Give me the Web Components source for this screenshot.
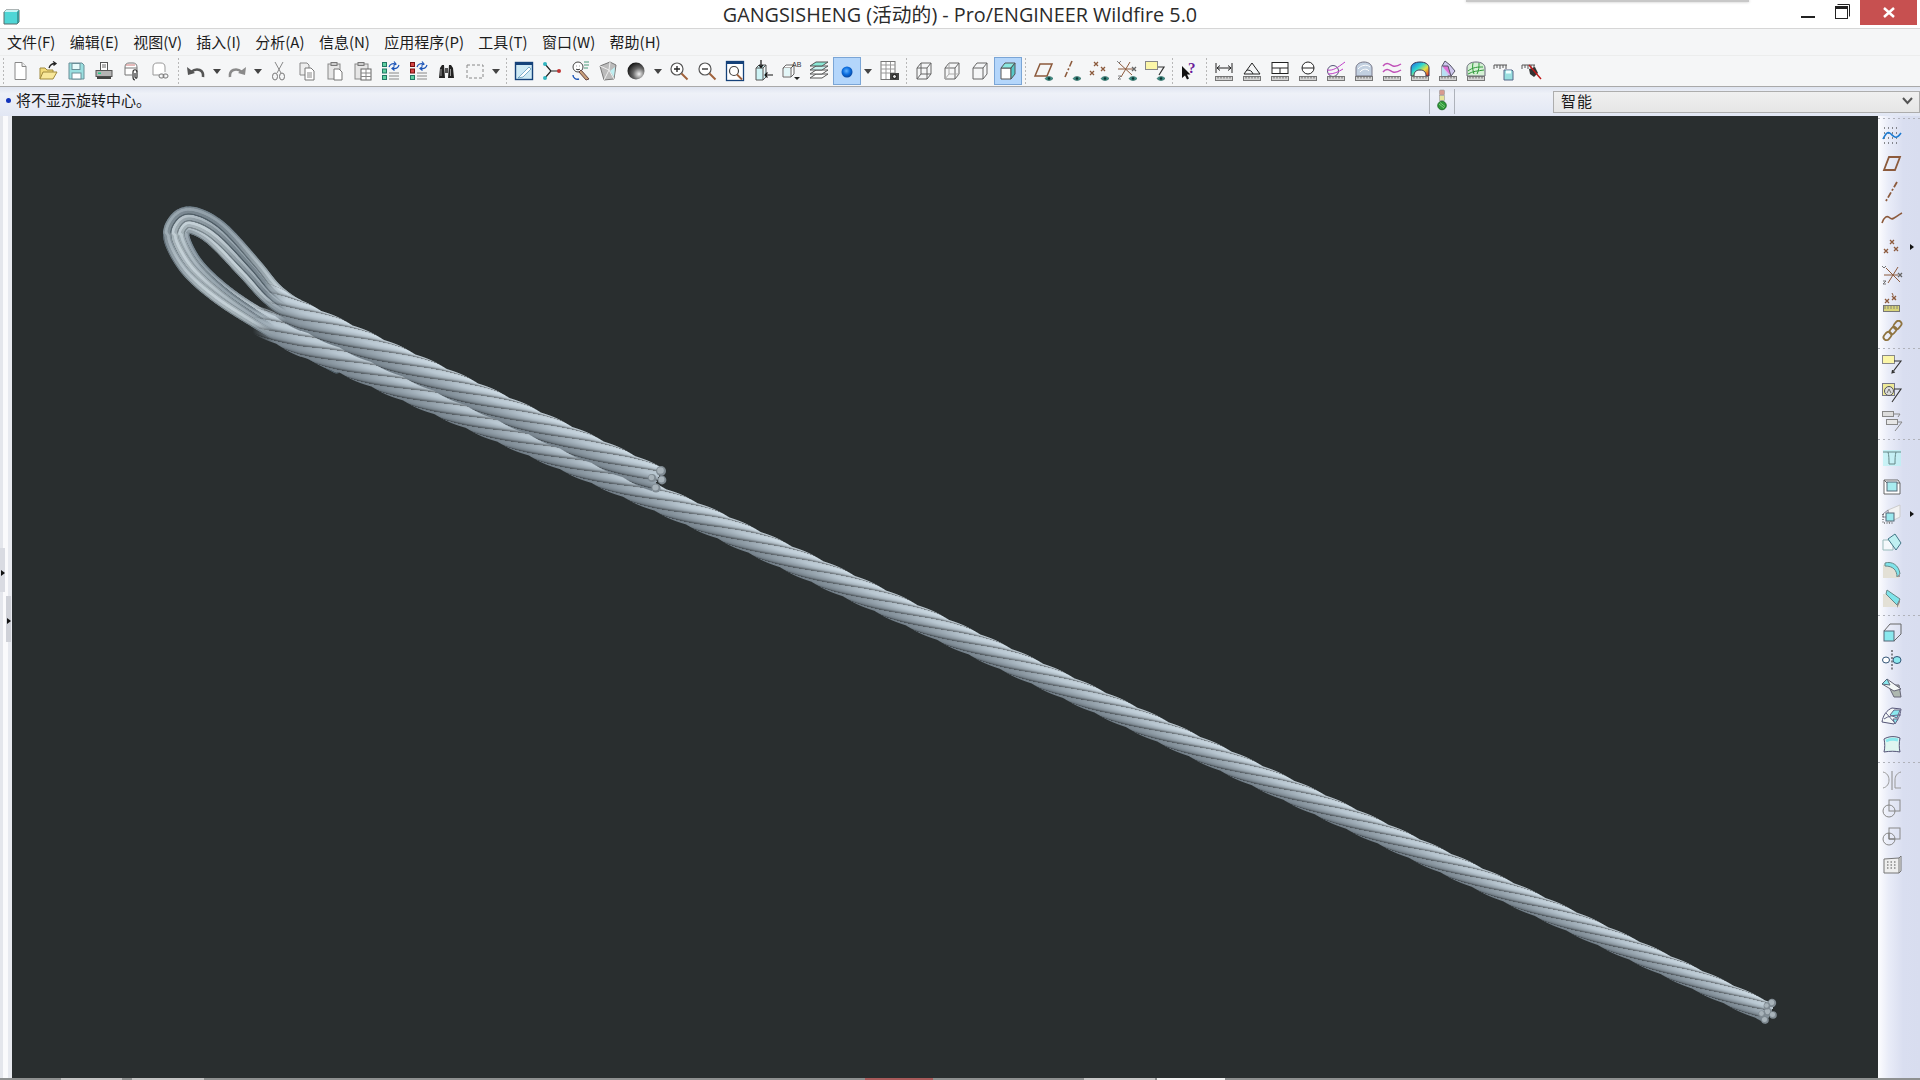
<!DOCTYPE html>
<html>
<head>
<meta charset="utf-8">
<title>GANGSISHENG</title>
<style>
  html, body { margin: 0; padding: 0; width: 1920px; height: 1080px; overflow: hidden; background: #f5f6f7; }
  body { font-family: "Noto Sans CJK SC", "Liberation Sans", sans-serif; }
</style>
</head>
<body>
<pe-app>
  <pe-titlebar>GANGSISHENG (活动的) - Pro/ENGINEER Wildfire 5.0</pe-titlebar>
  <pe-menubar>
    <pe-menu>文件(F)</pe-menu><pe-menu>编辑(E)</pe-menu><pe-menu>视图(V)</pe-menu><pe-menu>插入(I)</pe-menu><pe-menu>分析(A)</pe-menu>
    <pe-menu>信息(N)</pe-menu><pe-menu>应用程序(P)</pe-menu><pe-menu>工具(T)</pe-menu><pe-menu>窗口(W)</pe-menu><pe-menu>帮助(H)</pe-menu>
  </pe-menubar>
  <pe-toolbar>
    <pe-sep w="6"></pe-sep>
    <pe-tool icon="new"></pe-tool><pe-tool icon="open"></pe-tool><pe-tool icon="save"></pe-tool><pe-tool icon="print"></pe-tool><pe-tool icon="mail"></pe-tool><pe-tool icon="mail2"></pe-tool>
    <pe-sep w="8"></pe-sep>
    <pe-tool icon="undo"></pe-tool><pe-drop></pe-drop><pe-tool icon="redo"></pe-tool><pe-drop w="14"></pe-drop>
    <pe-tool icon="cut"></pe-tool><pe-tool icon="copy"></pe-tool><pe-tool icon="paste"></pe-tool><pe-tool icon="pastesp"></pe-tool><pe-tool icon="regen"></pe-tool><pe-tool icon="regen2"></pe-tool><pe-tool icon="find"></pe-tool><pe-tool icon="selbox"></pe-tool><pe-drop></pe-drop>
    <pe-sep w="8"></pe-sep>
    <pe-tool icon="repaint"></pe-tool><pe-tool icon="spin"></pe-tool><pe-tool icon="orient"></pe-tool><pe-tool icon="viewmgr"></pe-tool><pe-tool icon="ball"></pe-tool><pe-drop w="15"></pe-drop>
    <pe-tool icon="zoomin"></pe-tool><pe-tool icon="zoomout"></pe-tool><pe-tool icon="fit"></pe-tool><pe-tool icon="reorient"></pe-tool><pe-tool icon="saved"></pe-tool><pe-tool icon="layers"></pe-tool><pe-tool icon="center" active></pe-tool><pe-drop w="14"></pe-drop><pe-tool icon="table"></pe-tool>
    <pe-sep w="7"></pe-sep>
    <pe-tool icon="wire"></pe-tool><pe-tool icon="hidden"></pe-tool><pe-tool icon="nohidden"></pe-tool><pe-tool icon="shaded" active></pe-tool>
    <pe-sep w="7"></pe-sep>
    <pe-tool icon="planes"></pe-tool><pe-tool icon="axes"></pe-tool><pe-tool icon="points"></pe-tool><pe-tool icon="csys"></pe-tool><pe-tool icon="annot"></pe-tool>
    <pe-sep w="6"></pe-sep>
    <pe-tool icon="help"></pe-tool>
    <pe-sep w="7"></pe-sep>
    <pe-tool icon="mlen"></pe-tool><pe-tool icon="mang"></pe-tool><pe-tool icon="marea"></pe-tool><pe-tool icon="mdia"></pe-tool><pe-tool icon="mcurve"></pe-tool><pe-tool icon="mmesh"></pe-tool><pe-tool icon="mwave"></pe-tool><pe-tool icon="mrain"></pe-tool><pe-tool icon="msolid"></pe-tool><pe-tool icon="mgreen"></pe-tool><pe-tool icon="msave"></pe-tool><pe-tool icon="mdel"></pe-tool>
  </pe-toolbar>
  <pe-statusbar>将不显示旋转中心。<pe-combo slot="combo">智能</pe-combo></pe-statusbar>
  <pe-main>
    <pe-sash></pe-sash>
    <pe-viewport></pe-viewport>
    <pe-rightbar>
      <pe-rsep h="5"></pe-rsep>
      <pe-tool side icon="sketch"></pe-tool><pe-tool side icon="plane"></pe-tool><pe-tool side icon="axis"></pe-tool><pe-tool side icon="curve"></pe-tool><pe-tool side fly icon="rpoints"></pe-tool><pe-tool side icon="rcsys"></pe-tool><pe-tool side icon="analysis"></pe-tool><pe-tool side icon="chain"></pe-tool>
      <pe-rsep h="6"></pe-rsep>
      <pe-tool side icon="note"></pe-tool><pe-tool side icon="note2"></pe-tool><pe-tool side icon="note3"></pe-tool>
      <pe-rsep h="9"></pe-rsep>
      <pe-tool side icon="hole"></pe-tool><pe-tool side icon="shell"></pe-tool><pe-tool side fly icon="rib"></pe-tool><pe-tool side icon="draft"></pe-tool><pe-tool side icon="round"></pe-tool><pe-tool side icon="chamfer"></pe-tool>
      <pe-rsep h="6"></pe-rsep>
      <pe-tool side icon="extrude"></pe-tool><pe-tool side icon="revolve"></pe-tool><pe-tool side icon="sweep"></pe-tool><pe-tool side icon="blend"></pe-tool><pe-tool side icon="fill"></pe-tool>
      <pe-rsep h="8"></pe-rsep>
      <pe-tool side icon="mirror"></pe-tool><pe-tool side icon="merge"></pe-tool><pe-tool side icon="trim"></pe-tool><pe-tool side icon="pattern"></pe-tool>
    </pe-rightbar>
  </pe-main>
  <pe-taskstrip></pe-taskstrip>
</pe-app>

<script>
// small helpers for the measure icons and the "show" icons
const EYE = '<path d="M13 18.5c2-2.5 6-2.5 8 0-2 2.500-6 2.500-8 0z" fill="#3f8f86" stroke="#1f5f58" stroke-width=".7"/><circle cx="17" cy="18.500" r="1.300" fill="#0b3330"/>';
const RULER = '<rect x="2.500" y="16.500" width="17" height="4" fill="#d4d4d4" stroke="#777"/><path d="M5 16.500v2M8 16.500v2M11 16.500v2M14 16.500v2M17 16.500v2" stroke="#666"/>';
const X = (x, y, c = '#8c5a3c') => `<path d="M${x - 2} ${y - 2}l4 4m0-4l-4 4" stroke="${c}" stroke-width="1.300" fill="none"/>`;
const S = 'fill="none" stroke="#666"';

const ICONS = {
  new: '<path d="M6 2.500h7l4 4v13H6z" fill="#fff" stroke="#888"/><path d="M13 2.500v4h4" fill="#eee" stroke="#888"/>',
  open: '<path d="M3 19V8h5l2 2h6v2" fill="#f3dc7c" stroke="#a08a3c"/><path d="M3 19l3-7h14l-4 7z" fill="#f8e89a" stroke="#a08a3c"/><path d="M12 8c1-3 3-4.500 6-4.500m-2-2L19 3.500l-2.500 2" fill="none" stroke="#222" stroke-width="1.300"/>',
  save: '<path d="M4 3h13l2 2v14H4z" fill="#9adfe0" stroke="#6a8f98"/><rect x="7" y="3.500" width="8" height="6" fill="#e8fbfb" stroke="#6a8f98"/><rect x="7" y="13" width="9" height="6" fill="#fff" stroke="#6a8f98"/>',
  print: '<rect x="7.500" y="2.500" width="7" height="8" fill="#fff" stroke="#555"/><path d="M9 5h4M9 7h4" stroke="#666"/><rect x="3" y="10.500" width="16" height="6" fill="#b4b4b4" stroke="#555"/><rect x="4" y="16.500" width="14" height="2.500" fill="#444"/><rect x="5" y="12.500" width="3" height="1.500" fill="#2c8"/>',
  mail: '<path d="M4 15V7c0-3 2-4 4-4h4c2 0 4 1 4 4v5M4 8h12M4 15h7" fill="#fff" stroke="#777"/><path d="M5 5h9" stroke="#c77"/><path d="M14 20c-2 0-2-2-2-3v-5c0-3 4-3 4 0v5c0 2-2 1-2 0v-4" fill="none" stroke="#333" stroke-width="1.200"/>',
  mail2: '<path d="M4 15V7c0-3 2-4 4-4h4c2 0 4 1 4 4v5M4 15h6" fill="#fff" stroke="#999"/><rect x="10" y="14" width="5" height="4" rx="2" fill="none" stroke="#777"/><rect x="14" y="14" width="5" height="4" rx="2" fill="none" stroke="#777"/>',
  undo: '<path d="M18 17c1-7-6-10-12-5" fill="none" stroke="#555" stroke-width="2.600"/><path d="M2 7l1 8 7-2z" fill="#555"/>',
  redo: '<path d="M4 17c-1-7 6-10 12-5" fill="none" stroke="#8a8a8a" stroke-width="2.600"/><path d="M20 7l-1 8-7-2z" fill="#8a8a8a"/>',
  cut: '<path d="M7 2l6 11M15 2L9 13" stroke="#888" fill="none"/><ellipse cx="7" cy="16.500" rx="2.500" ry="3.500" fill="none" stroke="#777"/><ellipse cx="14" cy="16.500" rx="2.500" ry="3.500" fill="none" stroke="#777"/>',
  copy: '<path d="M4 3h7l2 2v10H4z" fill="#eee" stroke="#888"/><path d="M9 8h6l3 3v9H9z" fill="#fff" stroke="#777"/><path d="M11 13h5M11 15h5M11 17h5" stroke="#888"/>',
  paste: '<rect x="4" y="4" width="12" height="15" fill="#e6e6e6" stroke="#888"/><rect x="7" y="2.500" width="6" height="3" fill="#ccc" stroke="#777"/><path d="M10 9h5l3 3v8h-8z" fill="#fff" stroke="#777"/>',
  pastesp: '<rect x="3" y="4" width="13" height="15" fill="#e6e6e6" stroke="#888"/><rect x="6" y="2.500" width="6" height="3" fill="#ccc" stroke="#777"/><rect x="9" y="9" width="10" height="11" fill="#fff" stroke="#666"/><path d="M14 9v11M9 13h10M9 16.500h10" stroke="#888"/>',
  regen: '<rect x="2.500" y="2.500" width="4" height="4" fill="#5fcfa0" stroke="#276"/><rect x="2.500" y="9" width="4" height="4" fill="#5fcfa0" stroke="#276"/><rect x="2.500" y="15.500" width="4" height="4" fill="#5fcfa0" stroke="#276"/><path d="M9 13h10M9 16h10M9 19h10" stroke="#888"/><path d="M9 7c1-3 4-4 6-3m-1-2.500l2 2.500-2.500 1.500M19 5c-1 3-3 4-6 3.500m1.500 2L12 8.500l2.500-2" fill="none" stroke="#1c55b8" stroke-width="1.200"/>',
  regen2: '<rect x="2.500" y="2.500" width="4" height="4" fill="#d64545" stroke="#711"/><rect x="2.500" y="9" width="4" height="4" fill="#d64545" stroke="#711"/><rect x="2.500" y="15.500" width="4" height="4" fill="#5fcfa0" stroke="#276"/><path d="M9 13h10M9 16h10M9 19h10" stroke="#888"/><path d="M9 7c1-3 4-4 6-3m-1-2.500l2 2.500-2.500 1.500M19 5c-1 3-3 4-6 3.500m1.500 2L12 8.500l2.500-2" fill="none" stroke="#1c55b8" stroke-width="1.200"/>',
  find: '<path d="M3 18l1-10 2-3h2l1 13zM12 18l1-13h2l2 3 1 10z" fill="#222"/><rect x="9" y="8" width="3" height="5" fill="#555"/><path d="M5 9v7M14.500 9v7" stroke="#999"/>',
  selbox: '<rect x="3" y="5" width="16" height="13" fill="none" stroke="#888" stroke-dasharray="3 2"/>',
  repaint: '<rect x="2.500" y="2.500" width="17" height="17" fill="#cfeaf5" stroke="#15427a" stroke-width="1.400"/><rect x="2" y="2" width="18" height="3" fill="#15427a"/><path d="M16 7L8 15l-3 3 5-1 8-8z" fill="#fff" stroke="#4f8fb5" stroke-width=".7"/>',
  spin: '<path d="M4 4l6 7-6 7M10 11h8" fill="none" stroke="#222" stroke-width="1.200"/><circle cx="4" cy="4" r="2" fill="#33b5c0"/><circle cx="4" cy="18" r="2" fill="#33b5c0"/><circle cx="18" cy="11" r="2" fill="#c03333"/>',
  orient: '<circle cx="9" cy="7" r="5" fill="#fff" stroke="#444"/><path d="M7 6h.500M10 6h.500M7 9c1 1 3 1 4 0" stroke="#444"/><path d="M15 2h5M15 5h5M15 8h4" stroke="#4a9a7a"/><path d="M4 15c0 3 3 5 6 4" fill="none" stroke="#1c55b8" stroke-width="1.400"/><path d="M12 10l8 9-3 1-7-8z" fill="#c9a07a" stroke="#644"/>',
  viewmgr: '<path d="M3 6l10-4 6 3-2 14-10 1z" fill="#bbb" stroke="#777"/><path d="M13 2l-1 8 5 9M12 10L3 6M12 10l-5 10" stroke="#eee" fill="none"/><path d="M13 11l5-4-1 10z" fill="#bfeff2"/>',
  ball: '<defs><radialGradient id="bg" cx=".68" cy=".68" r=".8"><stop offset="0" stop-color="#f2f2f2"/><stop offset=".45" stop-color="#666"/><stop offset="1" stop-color="#050505"/></radialGradient></defs><circle cx="11" cy="11" r="8.500" fill="url(#bg)"/>',
  zoomin: '<circle cx="9" cy="9" r="6" fill="#fff" stroke="#555" stroke-width="1.200"/><path d="M6 9h6M9 6v6" stroke="#222" stroke-width="1.300"/><path d="M13.500 13.500l6 6" stroke="#a0623c" stroke-width="2"/>',
  zoomout: '<circle cx="9" cy="9" r="6" fill="#fff" stroke="#555" stroke-width="1.200"/><path d="M6 9h6" stroke="#222" stroke-width="1.300"/><path d="M13.500 13.500l6 6" stroke="#a0623c" stroke-width="2"/>',
  fit: '<rect x="2.500" y="1.500" width="17" height="19" fill="#fff" stroke="#15427a" stroke-width="1.300"/><rect x="2" y="1" width="18" height="3" fill="#15427a"/><circle cx="10" cy="11" r="4.500" fill="none" stroke="#444" stroke-width="1.200"/><path d="M13 14.500l5 5" stroke="#a0623c" stroke-width="1.800"/>',
  reorient: '<path d="M4 8h7v12H4zM4 8l3-3h7l-3 3M11 20l3-3V5" fill="#cdf3f5" stroke="#555"/><path d="M9 0v7m-2-2l2 2.500L11 5" fill="none" stroke="#111" stroke-width="1.200"/><path d="M21 15h-8m2.500-2.500L13 15l2.500 2.500" fill="none" stroke="#111" stroke-width="1.200"/>',
  saved: '<path d="M3 8h8v9H3zM3 8l3-3h8l-3 3M11 17l3-3V5" fill="#fff" stroke="#666"/><path d="M4 8h6v8H4z" fill="#e3f6f7"/><text x="12" y="7" font-size="7" font-family="Liberation Sans" fill="#333">AB</text><path d="M14 17h6l-3 3z" fill="#222"/>',
  layers: '<path d="M2 18l6-4h12l-6 4z" fill="#fff" stroke="#555"/><path d="M2 14l6-4h12l-6 4z" fill="#fff" stroke="#555"/><path d="M2 10l6-4h12l-6 4z" fill="#c8f2f0" stroke="#555"/><path d="M2 6l6-4h12l-6 4z" fill="#8ae8d5" stroke="#555"/>',
  center: '<defs><radialGradient id="cb" cx=".45" cy=".4" r=".65"><stop offset="0" stop-color="#63b3ff"/><stop offset=".5" stop-color="#0d6fe0"/><stop offset="1" stop-color="#063e92"/></radialGradient></defs><circle cx="11" cy="12" r="5.500" fill="url(#cb)"/>',
  table: '<rect x="3" y="1.500" width="14" height="18" fill="#fff" stroke="#777"/><path d="M3 5h14M3 9h14M3 13h14M8 2v17M12.500 2v17" stroke="#999"/><rect x="12" y="13" width="9" height="7" fill="#444"/><circle cx="16.500" cy="16.500" r="2" fill="#ddd" stroke="#111"/>',
  wire: `<path d="M4 8h10v11H4zM4 8l4-5h10l-4 5M14 19l4-5V3M4 19l4-5V3M8 14h10" ${S}/>`,
  hidden: `<path d="M4 8h10v11H4zM4 8l4-5h10l-4 5M14 19l4-5V3" ${S}/><path d="M4 19l4-5V3M8 14h10" stroke="#aaa" fill="none"/>`,
  nohidden: `<path d="M4 8h10v11H4zM4 8l4-5h10l-4 5M14 19l4-5V3" ${S}/>`,
  shaded: '<path d="M4 8h10v11H4z" fill="#fff" stroke="#555"/><path d="M4 8l4-5h10l-4 5z" fill="#8ae8e0" stroke="#555"/><path d="M14 19l4-5V3l-4 5z" fill="#55c8c8" stroke="#555"/>',
  planes: '<path d="M8 4h12l-5 12H3z" fill="none" stroke="#8c5a3c" stroke-width="1.500"/>' + EYE,
  axes: '<path d="M12 1l-7 16" stroke="#8c5a3c" stroke-width="1.600" stroke-dasharray="6 2 2 2" fill="none"/>' + EYE,
  points: X(8, 4) + X(4, 13) + X(15, 9) + EYE,
  csys: '<path d="M3 3l13 12M14 2L5 17M2 9h16" stroke="#8c5a3c" fill="none"/><path d="M1 1l2 2 2-2M2 16h3l-3 3h3" stroke="#666" fill="none" stroke-width=".8"/>' + X(18, 9, '#666') + EYE,
  annot: '<rect x="1.500" y="1.500" width="12" height="8" fill="#fbf6a8" stroke="#888"/><path d="M14 7h6l-5 8" stroke="#333" fill="none" stroke-width="1.200"/>' + EYE,
  help: '<path d="M4 6v12l3-2.500 2 4 2-1-2-4h3.500z" fill="#111"/><text x="10" y="13" font-size="15" font-weight="bold" font-family="Liberation Serif" fill="#6a1b9a">?</text>',
  mlen: '<path d="M3 3v10M19 3v10M4 8h14m-3-2.500L18 8l-3 2.500M7 5.500L4 8l3 2.500" fill="none" stroke="#222"/>' + RULER,
  mang: '<path d="M3 14h16L11 3z" fill="none" stroke="#222"/><path d="M6 10c3 0 5 1 6 4" fill="none" stroke="#222"/>' + RULER,
  marea: '<rect x="3" y="2.500" width="16" height="11" fill="#fff" stroke="#222"/><path d="M3 8h16M11 8v5" stroke="#222"/>' + RULER,
  mdia: '<circle cx="11" cy="8" r="6" fill="#fff" stroke="#222"/><path d="M5 8h12" stroke="#222"/>' + RULER,
  mcurve: '<circle cx="8" cy="11" r="5.500" fill="none" stroke="#557"/><path d="M2 10c6 1 10-2 18-8M3 14c6 0 10-2 15-5" fill="none" stroke="#c040c8"/>' + RULER,
  mmesh: '<path d="M3 16V8c0-3 3-6 8-6s8 3 8 6v8z" fill="#c2d0e0" stroke="#778"/><path d="M5 9c3-4 9-5 12-2M7 12c2-3 7-4 9-1" stroke="#fff" fill="none"/>' + RULER,
  mwave: '<path d="M2 6c4-5 7-1 10 0s5 0 8-2M2 12c4-5 7-1 10 0s5 0 8-2" fill="none" stroke="#c050b8" stroke-width="1.500"/>' + RULER,
  mrain: '<defs><linearGradient id="rn" x1="0" x2="1" y1="0" y2="1"><stop offset="0" stop-color="#2060e0"/><stop offset=".4" stop-color="#30d8d0"/><stop offset=".65" stop-color="#e8e040"/><stop offset="1" stop-color="#e02020"/></linearGradient></defs><path d="M2 16V8c0-4 4-6 9-6s9 2 9 6v8h-3c0-4-2-6-6-6s-6 2-6 6z" fill="url(#rn)" stroke="#335"/>' + RULER,
  msolid: '<path d="M8 1l5 4 5 6-4 5H5V6z" fill="#cfc8ee" stroke="#556"/><path d="M5 6h6l3 10" fill="#e070d8" stroke="#556"/><path d="M5 6v10h6" fill="#b6e0f2"/>' + RULER,
  mgreen: '<path d="M2 16V8c0-4 4-6 9-6s9 2 9 6v8z" fill="#d5f0d5" stroke="#667"/><path d="M3 11c5-4 10-4 15-4M3 14c5-3 10-3 16-4M8 3c-1 4 0 8 1 11M14 3c0 4 0 7-2 11" stroke="#2f9a3a" fill="none"/>' + RULER,
  msave: '<path d="M1 5h13" stroke="#555"/><path d="M1 5v4M4 5v3M7 5v4M10 5v3M13 5v4" stroke="#555"/><path d="M11 10h8l1 1v9H11z" fill="#9adfe0" stroke="#568"/><rect x="13" y="10.500" width="5" height="3" fill="#eff"/>',
  mdel: '<path d="M1 5h13" stroke="#555"/><path d="M1 5v4M4 5v3M7 5v4M10 5v3M13 5v4" stroke="#555"/><path d="M8 9l6-2 3 6-4 4-4-3z" fill="#333"/><path d="M8 5l12 14" stroke="#c01818" stroke-width="1.400"/>',
  sketch: '<path d="M3 4h16M3 9h16M3 14h16M3 19h16" stroke="#222" stroke-dasharray="1 3" fill="none"/><path d="M2 15c3-6 5-8 8-5s5 6 10-1" fill="none" stroke="#1c7ad0" stroke-width="1.600"/>',
  plane: '<path d="M8 5h11l-5 13H3z" fill="none" stroke="#8c5a3c" stroke-width="1.800"/>',
  axis: '<path d="M16 2L5 21" stroke="#8c5a3c" stroke-width="1.800" stroke-dasharray="6 2 2 2" fill="none"/>',
  curve: '<path d="M1 15c2-6 5-8 8-5s6-2 12-5" fill="none" stroke="#8c5a3c" stroke-width="1.600"/>',
  rpoints: X(11, 6) + X(5, 15) + X(15, 13),
  rcsys: '<path d="M5 4l14 14M17 3L7 19M3 11h14" stroke="#8c5a3c" fill="none"/><path d="M1 2l2 2 2-2M2 17h3l-3 3h3" stroke="#666" fill="none" stroke-width=".9"/>' + X(19, 11, '#666'),
  analysis: X(6, 9) + X(13, 6) + '<path d="M11 1l4 8" stroke="#8c5a3c" stroke-dasharray="3 1.500"/><rect x="2.500" y="13.500" width="16" height="6" fill="#d8d47a" stroke="#777"/><path d="M4 14v3M7 14v3M10 14v3M13 14v3M16 14v3" stroke="#887"/>',
  chain: '<g fill="none" stroke="#8f7440" stroke-width="1.800"><rect x="2" y="13" width="9" height="6" rx="3" transform="rotate(-50 6.500 16)"/><rect x="8" y="8" width="8" height="5" rx="2.500" transform="rotate(-50 12 10.500)"/><rect x="12" y="2" width="9" height="6" rx="3" transform="rotate(-50 16.500 5)"/></g>',
  note: '<rect x="1.500" y="1.500" width="12" height="8" fill="#fbf6a8" stroke="#888"/><path d="M13 7h7l-9 12m3-1l-3 1 .500-3" stroke="#333" fill="none" stroke-width="1.100"/>',
  note2: '<rect x="1.500" y="1.500" width="12" height="12" fill="#eeea98" stroke="#778"/><circle cx="8" cy="9" r="4.500" fill="#ddd" stroke="#555"/><path d="M6 11l2-4 2 4" fill="none" stroke="#555" stroke-width=".8"/><path d="M13 7h7l-9 13" stroke="#333" fill="none" stroke-width="1.100"/>',
  note3: '<rect x="1.500" y="1.500" width="11" height="5" fill="#ddd" stroke="#888"/><rect x="5.500" y="9.500" width="11" height="5" fill="#e6e6e6" stroke="#888"/><path d="M13 4h6l-2 3M17 12h4l-7 9" stroke="#888" fill="none"/>',
  hole: '<rect x="2" y="3" width="18" height="16" fill="#b8f2f4" opacity=".7"/><path d="M2 5h18M7 5c1 3 1 8 1 12h6c0-4 0-9 1-12" fill="none" stroke="#688"/>',
  shell: '<path d="M3 5h14l2 3v11H3z" fill="#fff" stroke="#666"/><path d="M3 5l3 3h13" stroke="#666" fill="none"/><rect x="6" y="7" width="10" height="9" fill="#a8ecf0" stroke="#567"/>',
  rib: '<path d="M7 7l12-5v12l-12 6z" fill="#f2f2f2" stroke="#ccc"/><path d="M2 11l5-4v7H2z" fill="#fff" stroke="#889"/><rect x="5" y="10" width="8" height="8" fill="#9ae8ee" stroke="#567"/><path d="M2 11v9h11" fill="none" stroke="#333" stroke-dasharray="1 1.500"/>',
  draft: '<path d="M2 9h10v10H2z" fill="#f4f8fb" stroke="#9bb"/><path d="M7 8l7-5 6 9-5 7z" fill="#bff0f2" stroke="#478"/>',
  round: '<path d="M2 6c5-3 14-2 16 8v5H2z" fill="#e3e0d6"/><path d="M4 4c7-2 14 2 15 11l-3 3c0-7-4-11-12-11z" fill="#7fe3ea" stroke="#688"/><path d="M19 15v-1l-3 4h3z" fill="#999"/>',
  chamfer: '<path d="M2 7h9l8 10v3H2z" fill="#e3e0d6"/><path d="M6 3l13 9-3 6L5 7z" fill="#7fe3ea" stroke="#688"/><path d="M19 12v3l-3 6v-3z" fill="#888"/>',
  extrude: '<rect x="3" y="10" width="10" height="10" fill="#8ae8ee" stroke="#567"/><path d="M3 10l6-7h11v10l-7 7" fill="none" stroke="#666"/>',
  revolve: '<path d="M11 1v20" stroke="#222" stroke-dasharray="2 1.500"/><ellipse cx="5" cy="11" rx="3.500" ry="3" fill="#fff" stroke="#357"/><ellipse cx="16" cy="11" rx="4" ry="3.500" fill="#8ae8ee" stroke="#357"/>',
  sweep: '<path d="M7 8l6 12h7l-2-12z" fill="#aeb8b0" stroke="#667"/><path d="M1 7l5-5 14 10-7 2z" fill="#f4f8f8" stroke="#667"/><path d="M1 7l5-5 3 6z" fill="#8ae8ee" stroke="#567"/>',
  blend: '<path d="M1 17c1-7 5-12 10-14l9 1c-1 7-3 11-7 15z" fill="#f4f8f8" stroke="#557"/><path d="M9 10l4-5 6 0-3 8zM12 14h5l-3 5z" fill="#8ae8ee" stroke="#668"/><path d="M5 8l8 9M3 14c4-3 10-4 17-4" stroke="#668" fill="none"/>',
  fill: '<path d="M3 19c1-4 1-9 0-13 5-3 11-3 16-1-1 5-1 10 0 14-5-1-10-1-16 0z" fill="#dff5f0" stroke="#557"/><path d="M5 8c4-2 8-2 12-1" stroke="#8ae8ee" stroke-width="3" fill="none"/>',
  mirror: '<path d="M11 2v19" stroke="#888"/><path d="M2 3c4 1 6 4 6 8s-2 7-6 8M20 3c-4 1-6 4-6 8v8h6" fill="none" stroke="#999"/>',
  merge: '<rect x="8" y="3" width="11" height="11" fill="none" stroke="#888"/><circle cx="8" cy="14" r="6" fill="none" stroke="#888"/>',
  trim: '<rect x="8" y="3" width="11" height="11" fill="none" stroke="#888"/><circle cx="8" cy="14" r="6" fill="none" stroke="#888"/><path d="M8 8v6h6" stroke="#777" fill="none"/>',
  pattern: '<path d="M3 6l15-1 2-2v15l-2 2H3z" fill="#eee" stroke="#777"/><path d="M18 5v15" stroke="#777"/><path d="M6 9h10M6 12h10M6 15h10" stroke="#555" stroke-dasharray="1.500 2"/>'
};

class PeApp extends HTMLElement {
  constructor() {
    super();
    this.attachShadow({ mode: 'open' }).innerHTML = `
      <style>
        :host { display: flex; flex-direction: column; width: 1920px; height: 1080px; background: #f5f6f7; color: #1a1a1a; }
      </style><slot></slot>`;
  }
}

class PeTitlebar extends HTMLElement {
  constructor() {
    super();
    this.attachShadow({ mode: 'open' }).innerHTML = `
      <style>
        :host { display: grid; grid-template-columns: 300px 1fr 300px; height: 29px; box-sizing: border-box; background: #fff; border-bottom: 1px solid #d6d6d6; flex: none; position: relative; }
        .logo { padding: 6px 0 0 3px; }
        .name { text-align: center; font: 19.800px/30px "Open Sans", "Noto Sans CJK SC", sans-serif; color: #2b2b2b; white-space: nowrap; }
        .btns { display: flex; justify-content: flex-end; height: 25px; padding-right: 3px; }
        .btn { width: 34px; display: flex; align-items: center; justify-content: center; }
        .min svg { margin-top: 8px; }
        .max svg { margin-top: -3px; }
        .close { width: 57px; background: #c75050; margin-left: 1px; }
        .shade { position: absolute; left: 1466px; width: 283px; top: 0; height: 2px; background: #c8c8c8; box-shadow: 0 0 3px #bbb; }
      </style>
      <div class="logo"><svg width="17" height="16" viewBox="0 0 17 16"><path d="M1 3l2-2h13v12l-2 2H1z" fill="#4fd6d6" stroke="#5a6a6a"/><path d="M1 3l2-2h13l-2 2z" fill="#c8f4f4"/><path d="M14 3l2-2v12l-2 2z" fill="#3c9c9c"/></svg></div>
      <div class="name"><slot></slot></div>
      <div class="btns">
        <div class="btn min"><svg width="14" height="4"><rect y="1" width="14" height="2" fill="#222"/></svg></div>
        <div class="btn max"><svg width="15" height="16" viewBox="0 0 15 16"><path d="M2.500 1.500h12v12" fill="none" stroke="#222"/><rect x=".5" y="3.500" width="12" height="12" fill="#fff" stroke="#222"/><rect x="0" y="3" width="13" height="3" fill="#222"/></svg></div>
        <div class="btn close"><svg width="12" height="11"><path d="M1 1l10 9m0-9L1 10" stroke="#fff" stroke-width="2.500"/></svg></div>
      </div>
      <div class="shade"></div>`;
  }
}

class PeMenubar extends HTMLElement {
  constructor() {
    super();
    this.attachShadow({ mode: 'open' }).innerHTML = `
      <style>
        :host { display: flex; gap: 14.400px; align-items: center; height: 26px; padding-left: 7px; box-sizing: border-box; background: #f5f6f7; flex: none; }
      </style><slot></slot>`;
  }
}

class PeMenu extends HTMLElement {
  constructor() {
    super();
    this.attachShadow({ mode: 'open' }).innerHTML = `
      <style>
        :host { display: block; font: 15px/20px "Noto Sans CJK SC", "Liberation Sans", sans-serif; color: #1c1c1c; white-space: nowrap; }
      </style><slot></slot>`;
  }
}

class PeToolbar extends HTMLElement {
  constructor() {
    super();
    this.attachShadow({ mode: 'open' }).innerHTML = `
      <style>
        :host { display: flex; align-items: center; height: 32px; box-sizing: border-box; background: #f5f6f7; border-top: 1px solid #eceded; border-bottom: 1px solid #a9a9a9; flex: none; }
      </style><slot></slot>`;
  }
}

class PeTool extends HTMLElement {
  constructor() {
    super();
    this.attachShadow({ mode: 'open' }).innerHTML = `
      <style>
        :host { display: flex; flex: none; width: 28px; height: 28px; box-sizing: border-box; align-items: center; justify-content: center; position: relative; }
        :host([active]) { background: #b4d6fb; border: 1px solid #7aa5d6; }
        :host([fly])::after { content: ""; position: absolute; left: 32px; top: 11px; border-left: 4px solid #111; border-top: 3px solid transparent; border-bottom: 3px solid transparent; }
        svg { display: block; flex: none; }
      </style>
      <svg width="22" height="22" viewBox="0 0 22 22"></svg>`;
  }
  connectedCallback() {
    this.shadowRoot.querySelector('svg').innerHTML = ICONS[this.getAttribute('icon')] || '';
  }
}

class PeDrop extends HTMLElement {
  constructor() {
    super();
    this.attachShadow({ mode: 'open' }).innerHTML = `
      <style>
        :host { display: flex; flex: none; width: 13px; justify-content: center; align-items: center; height: 28px; }
        i { display: block; border-top: 5px solid #444; border-left: 4.5px solid transparent; border-right: 4.5px solid transparent; }
      </style><i></i>`;
  }
  connectedCallback() { if (this.hasAttribute('w')) this.style.width = this.getAttribute('w') + 'px'; }
}

class PeSep extends HTMLElement {
  constructor() {
    super();
    this.attachShadow({ mode: 'open' }).innerHTML = `
      <style>
        :host { display: flex; flex: none; justify-content: center; height: 26px; }
        i { width: 1px; background: repeating-linear-gradient(#b8b8b8 0 2px, transparent 2px 4px); }
      </style><i></i>`;
  }
  connectedCallback() { this.style.width = this.getAttribute('w') + 'px'; }
}

class PeStatusbar extends HTMLElement {
  constructor() {
    super();
    this.attachShadow({ mode: 'open' }).innerHTML = `
      <style>
        :host { display: flex; align-items: center; height: 29px; box-sizing: border-box; flex: none; background: linear-gradient(#dfe4f0, #eef1f8 22%, #e2e7f4); }
        .dot { width: 5px; height: 5px; border-radius: 50%; background: #1133bb; margin: 0 5px 3px 6px; flex: none; }
        .msg { width: 1413px; font: 15px/20px "Noto Sans CJK SC", sans-serif; color: #1a1a1a; flex: none; margin-bottom: 3px; }
        .light { width: 26px; height: 25px; box-sizing: border-box; border-left: 1px solid #aeb2ba; border-right: 1px solid #aeb2ba; display: flex; justify-content: center; flex: none; margin-right: 98px; }
      </style>
      <div class="dot"></div>
      <div class="msg"><slot></slot></div>
      <div class="light"><svg width="10" height="22" viewBox="0 0 10 22"><rect x="2.500" y="1" width="5" height="5" rx="1" fill="#d89a90" stroke="#999" stroke-width=".6"/><rect x="2.500" y="6.500" width="5" height="5" fill="#e6e49a" stroke="#999" stroke-width=".6"/><circle cx="5" cy="16.500" r="4.300" fill="#2f9a3a" stroke="#15601e" stroke-width=".8"/><path d="M2 15l5 4M3 13.500l5 4" stroke="#9ee09a" stroke-width=".7"/></svg></div>
      <slot name="combo"></slot>`;
  }
}

class PeCombo extends HTMLElement {
  constructor() {
    super();
    this.attachShadow({ mode: 'open' }).innerHTML = `
      <style>
        :host { display: flex; align-items: center; justify-content: space-between; flex: 1; height: 22px; box-sizing: border-box; border: 1px solid #adadad; background: linear-gradient(#f0f0f0, #e6e6e6); padding: 0 6px 1px 7px; font: 15px/20px "Noto Sans CJK SC", sans-serif; letter-spacing: 1px; color: #1a1a1a; }
      </style>
      <span><slot></slot></span>
      <svg width="11" height="8"><path d="M1 1l4.500 5L10 1" fill="none" stroke="#555" stroke-width="2"/></svg>`;
  }
}

class PeMain extends HTMLElement {
  constructor() {
    super();
    this.attachShadow({ mode: 'open' }).innerHTML = `
      <style>:host { display: flex; flex: 1; min-height: 0; }</style><slot></slot>`;
  }
}

class PeSash extends HTMLElement {
  constructor() {
    super();
    this.attachShadow({ mode: 'open' }).innerHTML = `
      <style>
        :host { display: flex; width: 12px; flex: none; background: linear-gradient(90deg, #e4e6ec 0 3px, #fafafc 3px 8px, #e8eaf0 8px); }
        .col { display: flex; flex-direction: column; align-items: center; width: 6px; }
        .a { background: #d9dbe2; height: 44px; margin-top: 432px; width: 5px; }
        .b { background: #cfd1d8; height: 46px; margin-top: 480px; margin-left: 1px; width: 5px; }
        i { display: block; border-left: 4px solid #111; border-top: 3px solid transparent; border-bottom: 3px solid transparent; margin-top: 22px; width: 0; }
      </style>
      <div class="col a"><i></i></div><div class="col b"><i></i></div>`;
  }
}

class PeRightbar extends HTMLElement {
  constructor() {
    super();
    this.attachShadow({ mode: 'open' }).innerHTML = `
      <style>
        :host { display: flex; flex-direction: column; width: 42px; flex: none; background: linear-gradient(90deg, #fdfdff 0, #e9ecf8 25%, #d9def0 60%, #d8ddef); }
      </style><slot></slot>`;
  }
}

class PeRsep extends HTMLElement {
  constructor() {
    super();
    this.attachShadow({ mode: 'open' }).innerHTML = `
      <style>
        :host { display: flex; align-items: center; flex: none; }
        i { display: block; width: 100%; height: 1px; background: repeating-linear-gradient(90deg, #b0b2ba 0 2px, transparent 2px 5px); }
      </style><i></i>`;
  }
  connectedCallback() { this.style.height = this.getAttribute('h') + 'px'; }
}

class PeTaskstrip extends HTMLElement {
  constructor() {
    super();
    this.attachShadow({ mode: 'open' }).innerHTML = `
      <style>
        :host { display: flex; height: 2px; flex: none; background: #8e9090; }
        i { display: block; height: 2px; }
      </style>
      <i style="margin-left:61px;width:61px;background:#c4c4c4"></i>
      <i style="margin-left:10px;width:72px;background:#c4c4c4"></i>
      <i style="margin-left:661px;width:68px;background:#a85a5a"></i>
      <i style="margin-left:151px;width:71px;background:#c8c8c8"></i>
      <i style="margin-left:2px;width:68px;background:#f2f2f2"></i>`;
  }
}

// the wire rope: the loop is stroked, the two straight legs are shaded pixel by pixel
class PeViewport extends HTMLElement {
  constructor() {
    super();
    this.attachShadow({ mode: 'open' }).innerHTML = `
      <style>
        :host { display: block; flex: 1; background: #292e2f; overflow: hidden; }
        canvas { display: block; }
      </style>
      <canvas width="1866" height="962"></canvas>`;
  }
  connectedCallback() {
    const ctx = this.shadowRoot.querySelector('canvas').getContext('2d');
    const OX = 12, OY = 116, W = 1866, H = 962;
    ctx.translate(-OX, -OY);
    ctx.lineCap = 'round';

    const shade = (v, add) => {
      const k = Math.max(0, Math.min(1, v));
      const r = 118 + 62 * k + add, g = 132 + 60 * k + add, b = 142 + 56 * k + add;
      return `rgb(${r | 0},${g | 0},${b | 0})`;
    };

    // dense points along a Catmull-Rom line through pts
    const sample = pts => {
      const out = [];
      for (let i = 0; i < pts.length - 1; i++) {
        const p0 = pts[Math.max(0, i - 1)], p1 = pts[i], p2 = pts[i + 1], p3 = pts[Math.min(pts.length - 1, i + 2)];
        const n = Math.ceil(Math.hypot(p2[0] - p1[0], p2[1] - p1[1]));
        for (let j = 0; j < n; j++) {
          const t = j / n, t2 = t * t, t3 = t2 * t;
          out.push([
            .5 * (2 * p1[0] + (p2[0] - p0[0]) * t + (2 * p0[0] - 5 * p1[0] + 4 * p2[0] - p3[0]) * t2 + (3 * p1[0] - p0[0] - 3 * p2[0] + p3[0]) * t3),
            .5 * (2 * p1[1] + (p2[1] - p0[1]) * t + (2 * p0[1] - 5 * p1[1] + 4 * p2[1] - p3[1]) * t2 + (3 * p1[1] - p0[1] - 3 * p2[1] + p3[1]) * t3)
          ]);
        }
      }
      return out;
    };

    const loop = (pts, offs) => {
      const line = sample(pts);
      offs.forEach((o, k) => {
        const p = [];
        for (let s = 0; s < line.length; s += 2) {
          const a = line[Math.max(0, s - 3)], b = line[Math.min(line.length - 1, s + 3)];
          const l = Math.hypot(b[0] - a[0], b[1] - a[1]) || 1;
          const nx = (b[1] - a[1]) / l, ny = -(b[0] - a[0]) / l;
          const t = o + 1.6 * Math.sin(s / 55 + k);
          const side = ny > 0 ? -1 : 1;
          p.push({ x: line[s][0] + nx * t, y: line[s][1] + ny * t, ux: nx * side, uy: ny * side, v: .55 + .4 * Math.sin(s / 38 + k * 1.4) });
        }
        [[8.2, -48, 0], [6.6, -8, .5], [2.6, 20, 1.1]].forEach(([w, add, shift]) => {
          ctx.lineWidth = w;
          for (let i = 1; i < p.length; i++) {
            ctx.strokeStyle = shade(p[i].v, add);
            ctx.beginPath();
            ctx.moveTo(p[i - 1].x + p[i - 1].ux * shift, p[i - 1].y + p[i - 1].uy * shift);
            ctx.lineTo(p[i].x + p[i].ux * shift, p[i].y + p[i].uy * shift);
            ctx.stroke();
          }
        });
      });
    };

    const ends = list => {
      for (const [x, y, r] of list) {
        ctx.fillStyle = '#7f8a92';
        ctx.beginPath(); ctx.arc(x, y, r, 0, 7); ctx.fill();
        ctx.fillStyle = '#a8b3ba';
        ctx.beginPath(); ctx.arc(x - .5, y - .5, r * .66, 0, 7); ctx.fill();
      }
    };

    // twisted leg. Every pixel is mapped on the cylinder, then on the strand it falls in
    const P = 230, N = 8, COS = .915;
    const leg = (pts, radius, fadeX, endX, endY) => {
      const x0 = pts[0][0], x1 = pts[pts.length - 1][0] + 30;
      const img = ctx.getImageData(0, 0, W, H), d = img.data;
      const frac = v => v - Math.floor(v);
      let seg = 0;
      for (let x = x0; x <= x1; x++) {
        while (seg < pts.length - 2 && x > pts[seg + 1][0]) seg++;
        const a = pts[seg], b = pts[seg + 1];
        const m = (b[1] - a[1]) / (b[0] - a[0]);
        const cos = 1 / Math.sqrt(1 + m * m);
        const yc = a[1] + (x - a[0]) * m;
        const R = radius(x);
        const span = Math.ceil(R / cos) + 2;
        for (let y = Math.floor(yc - span); y <= yc + span; y++) {
          const t = (y - yc) * cos;
          if ((x - endX) + (y - endY) * m > 0) continue;
          const s = (x + (y - yc) * m) * COS;
          const u = Math.max(-1, Math.min(1, t / R));
          const phi = Math.asin(u);
          const turn = 2 * Math.PI * s / P;
          const q = frac((phi + turn) * N / (2 * Math.PI));
          const qe = frac(((u < 0 ? -1 : 1) * Math.PI / 2 + turn) * N / (2 * Math.PI));
          const edge = R * (.9 + .1 * Math.sin(Math.PI * qe));
          let alpha = Math.max(0, Math.min(1, edge - Math.abs(t) + .5));
          alpha *= Math.max(0, Math.min(1, (x - fadeX) / 22));
          if (alpha <= 0) continue;
          // round strand lit from above, with a dark crease under it
          const c = q * 2 - 1;
          let l = .62 + .38 * (1 - (c + .3) * (c + .3));
          if (q > .76) l *= 1 - (q - .76) / .24 * .78;
          if (q < .05) l *= .78 + q * 4.4;
          const g = (1 - u) / 2;
          const k = (.62 + .5 * l) * (.78 + .22 * Math.min(1, g * 1.6));
          const rgb = [(128 + 58 * g) * k, (142 + 56 * g) * k, (153 + 53 * g) * k];
          const i = ((y - OY) * W + (x - OX)) * 4;
          for (let n = 0; n < 3; n++) d[i + n] = d[i + n] * (1 - alpha) + rgb[n] * alpha;
          d[i + 3] = Math.max(d[i + 3], alpha * 255);
        }
      }
      ctx.putImageData(img, 0, 0);
    };

    // canvas is transparent at first: the pixels blend on the viewport colour
    ctx.fillStyle = '#292e2f';
    ctx.fillRect(OX, OY, W, H);

    loop([[340, 362], [300, 342], [256, 317], [220, 293], [192, 267], [177, 240], [179, 226], [191, 220], [216, 233], [250, 269], [272, 294], [298, 312], [340, 335]], [-8, -2.7, 2.7, 8]);

    const wide = x => 11 + (1770 - x) * .0022;
    leg([[250, 316], [300, 341], [600, 473], [720, 526], [1000, 656], [1780, 1018]], wide, 252, 1770, 1013);
    ends([[1772, 1003, 4.2], [1768, 1012, 4], [1773, 1015, 3.8], [1765, 1020, 3.8], [1762, 1014, 3.6], [1767, 1006, 3.4]]);

    leg([[262, 294], [300, 315], [600, 453], [680, 490]], wide, 264, 657, 479);
    ends([[661, 471, 5], [662, 480, 4.4], [656, 488, 4.6], [652, 478, 4]]);
  }
}

customElements.define('pe-app', PeApp);
customElements.define('pe-titlebar', PeTitlebar);
customElements.define('pe-menubar', PeMenubar);
customElements.define('pe-menu', PeMenu);
customElements.define('pe-toolbar', PeToolbar);
customElements.define('pe-tool', PeTool);
customElements.define('pe-drop', PeDrop);
customElements.define('pe-sep', PeSep);
customElements.define('pe-statusbar', PeStatusbar);
customElements.define('pe-combo', PeCombo);
customElements.define('pe-main', PeMain);
customElements.define('pe-sash', PeSash);
customElements.define('pe-rightbar', PeRightbar);
customElements.define('pe-rsep', PeRsep);
customElements.define('pe-taskstrip', PeTaskstrip);
customElements.define('pe-viewport', PeViewport);
</script>
</body>
</html>
